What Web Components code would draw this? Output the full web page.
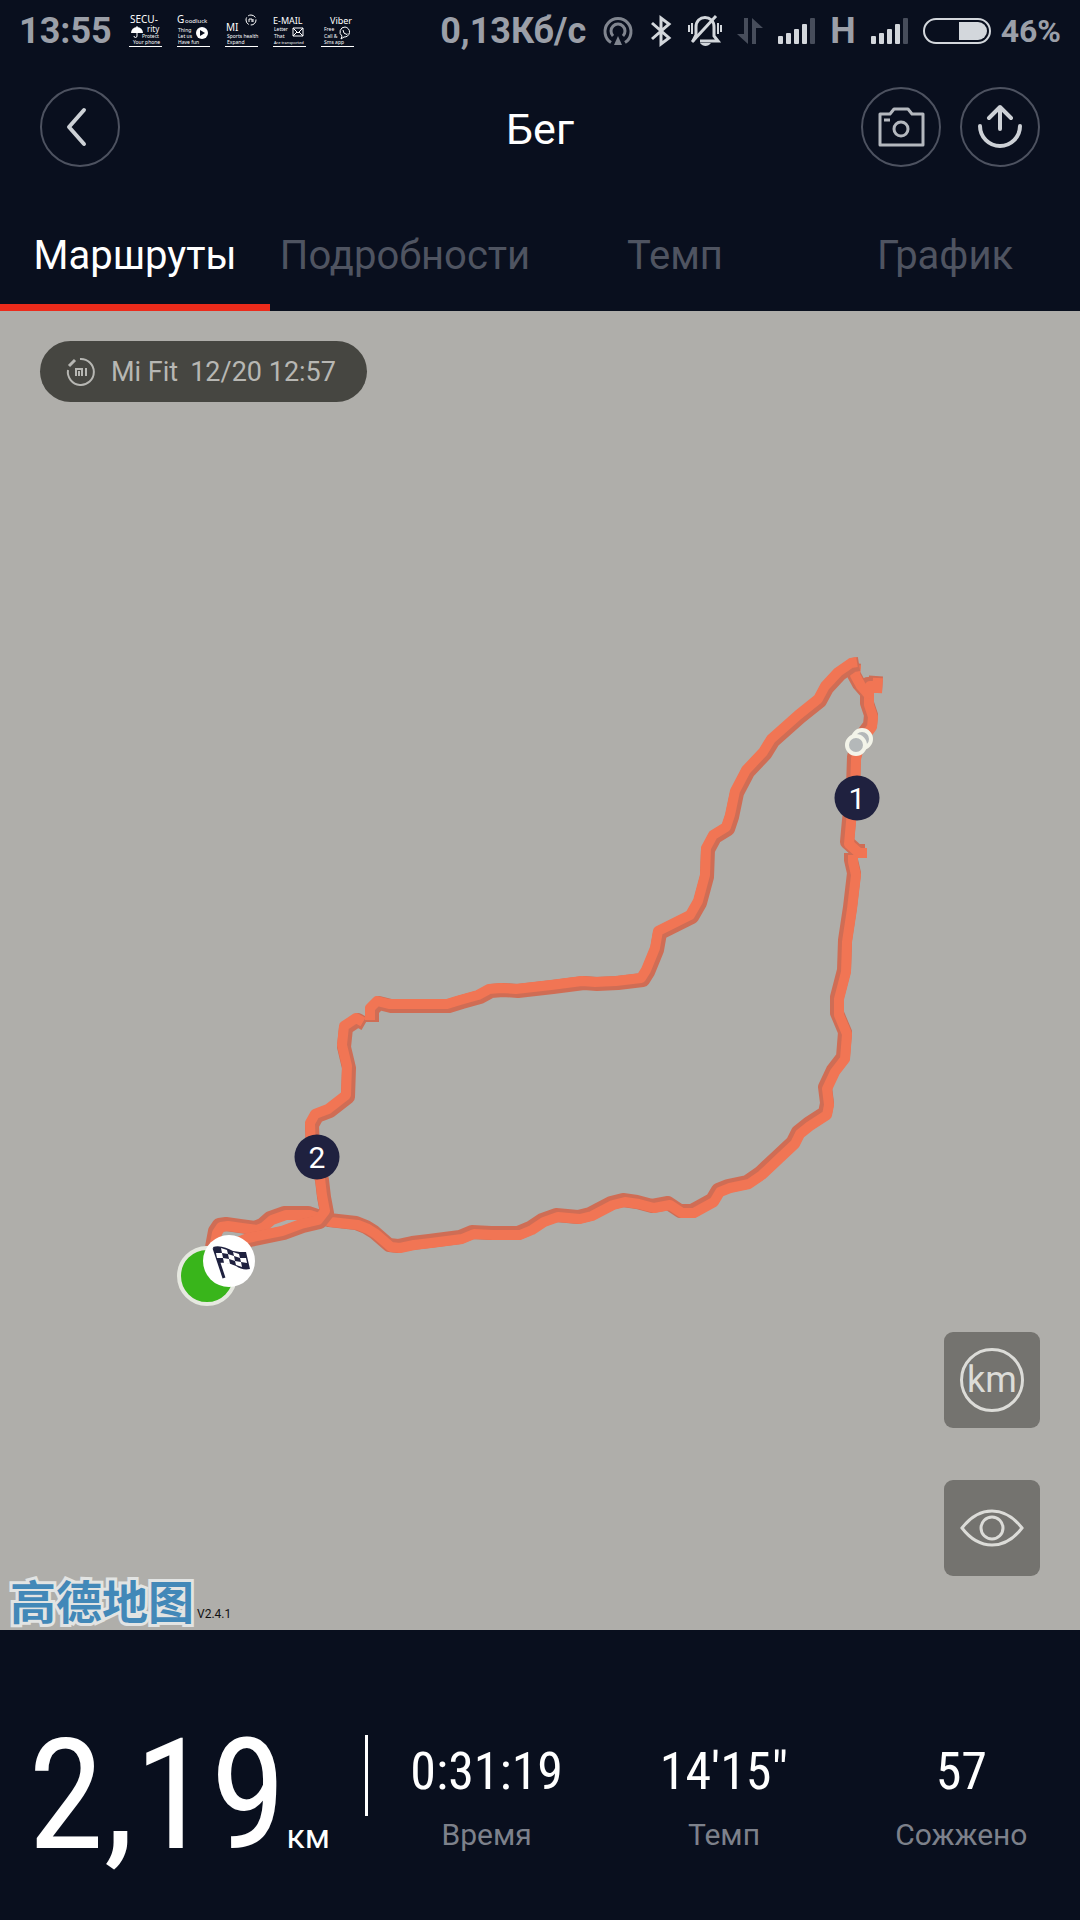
<!DOCTYPE html>
<html lang="ru">
<head>
<meta charset="utf-8">
<meta name="viewport" content="width=device-width, initial-scale=1">
<title>Бег</title>
<style>
  html, body {
    height: 100%;
  }
  body {
    margin: 0;
    background: #090f1e;
    color: #fff;
    font-family: Roboto, "Noto Sans", sans-serif;
  }
</style>
</head>
<body>
<run-screen>
  <status-bar slot="top"></status-bar>
  <title-bar slot="top">Бег</title-bar>
  <tab-bar slot="top"></tab-bar>
  <route-map></route-map>
  <run-summary slot="bottom" distance="2,19" unit="км">
    <stat-item label="Время">0:31:19</stat-item>
    <stat-item label="Темп">14'15"</stat-item>
    <stat-item label="Сожжено">57</stat-item>
  </run-summary>
</run-screen>

<script>
class RunScreen extends HTMLElement {
  connectedCallback() {
    this.attachShadow({ mode: 'open' });
    this.shadowRoot.innerHTML = `
      <style>
        :host {
          display: flex;
          flex-direction: column;
          min-height: 100vh;
        }
        main {
          flex: 1;
          display: flex;
          flex-direction: column;
        }
      </style>
      <header><slot name="top"></slot></header>
      <main><slot></slot></main>
      <footer><slot name="bottom"></slot></footer>
    `;
  }
}
customElements.define('run-screen', RunScreen);

class StatusBar extends HTMLElement {
  connectedCallback() {
    const signal = `
      <svg width="37" height="26" viewBox="0 0 37 26" fill="#d3d7dc">
        <rect x="0" y="18" width="5" height="8" rx="1"/>
        <rect x="8" y="15" width="5" height="11" rx="1"/>
        <rect x="16" y="11" width="5" height="15" rx="1"/>
        <rect x="24" y="6" width="5" height="20" rx="1"/>
        <rect x="32" y="0" width="5" height="26" rx="1" fill="#474d5b"/>
      </svg>`;
    this.attachShadow({ mode: 'open' });
    this.shadowRoot.innerHTML = `
      <style>
        :host {
          display: flex;
          align-items: center;
          justify-content: space-between;
          height: 60px;
          padding: 2px 19px 0;
          box-sizing: border-box;
          font-size: 36px;
          font-weight: 700;
          line-height: 40px;
          color: #9b9fa8;
        }
        svg {
          display: block;
          flex: none;
          overflow: visible;
        }
        .group {
          display: flex;
          align-items: center;
          gap: 15px;
        }
        .apps {
          margin-left: 2px;
        }
        .apps text {
          fill: #fff;
          font-family: "Noto Sans", sans-serif;
          font-weight: 400;
        }
        .power {
          display: flex;
          align-items: center;
          gap: 10px;
        }
        .percent {
          font-size: 32px;
        }
      </style>
      <div class="group">
        <time>13:55</time>
        <div class="group apps">
          <svg width="33" height="34" viewBox="0 0 33 34">
            <text x="1" y="9" font-size="10">SECU-</text>
            <text x="18" y="18" font-size="8">rity</text>
            <text x="13" y="24" font-size="5">Protect</text>
            <text x="4" y="30" font-size="5">Your phone</text>
            <path d="M2 19a6 6 0 0 1 12 0z" fill="#fff"/>
            <path d="M8 12v10a1.500 1.500 0 0 1-3 0" fill="none" stroke="#fff"/>
            <path d="M0 32.500h33" stroke="#fff"/>
          </svg>
          <svg width="33" height="34" viewBox="0 0 33 34">
            <text x="0" y="9" font-size="10">G</text>
            <text x="8" y="9" font-size="6">oodluck</text>
            <text x="1" y="18" font-size="5">Thing</text>
            <text x="1" y="24" font-size="5">Let us</text>
            <text x="1" y="30" font-size="5">Have fun</text>
            <circle cx="25" cy="19" r="6" fill="#fff"/>
            <path d="M23 16l5 3-5 3z" fill="#090f1e"/>
            <path d="M0 32.500h33" stroke="#fff"/>
          </svg>
          <svg width="33" height="34" viewBox="0 0 33 34">
            <text x="1" y="17" font-size="10">MI</text>
            <text x="2" y="24" font-size="5">Sports health</text>
            <text x="2" y="30" font-size="5">Expand</text>
            <circle cx="26" cy="6" r="5" fill="none" stroke="#fff" stroke-dasharray="8 2"/>
            <path d="M24 8v-3h3v3M28 5v3" fill="none" stroke="#fff"/>
            <path d="M0 32.500h33" stroke="#fff"/>
          </svg>
          <svg width="33" height="34" viewBox="0 0 33 34">
            <text x="0" y="10" font-size="9">E-MAIL</text>
            <text x="1" y="17" font-size="5">Letter</text>
            <text x="1" y="24" font-size="5">That</text>
            <text x="1" y="30" font-size="4">Are transported</text>
            <path d="M20 14h10v8h-10zl5 5 5-5M20 22l4-4M30 22l-4-4" fill="none" stroke="#fff"/>
            <path d="M0 32.500h33" stroke="#fff"/>
          </svg>
          <svg width="33" height="34" viewBox="0 0 33 34">
            <text x="9" y="10" font-size="9">Viber</text>
            <text x="3" y="17" font-size="5">Free</text>
            <text x="3" y="24" font-size="5">Call &amp;</text>
            <text x="3" y="30" font-size="5">Sms app</text>
            <path d="M24 13a5 5 0 1 1-1 10l-3 2 1-3a5 5 0 0 1 3-9z" fill="none" stroke="#fff"/>
            <path d="M22 16q0 4 4 4.500l1-1" fill="none" stroke="#fff"/>
            <path d="M0 32.500h33" stroke="#fff"/>
          </svg>
        </div>
      </div>
      <div class="group">
        <span>0,13Кб/с</span>
        <svg width="34" height="30" viewBox="0 0 34 30" fill="none" stroke="#80858f" stroke-width="3">
          <path d="M10 26.500a13 13 0 1 1 14 0"/>
          <path d="M12 20a7 7 0 1 1 10 0"/>
          <path d="M17 20l4 9h-8z" fill="#80858f" stroke="none"/>
        </svg>
        <svg width="23" height="30" viewBox="0 0 23 30" fill="none" stroke="#d3d7dc" stroke-width="3">
          <path d="M2 7l17 15-8 6V2l8 6L2 23"/>
        </svg>
        <svg width="34" height="32" viewBox="0 0 34 32" fill="none" stroke="#d3d7dc" stroke-width="3">
          <path d="M5 26l3-6v-8C8 6 12 2.500 17 2.500S26 6 26 12v9l4 5H12"/>
          <path d="M28 1L4 27"/>
          <path d="M12 28h11c-3 4-8 4-11 0z" fill="#d3d7dc" stroke="none"/>
          <path d="M1 10v7M4 8v11M30 8v11M33 10v7" stroke-width="2"/>
        </svg>
        <svg width="26" height="26" viewBox="0 0 26 26" fill="#474d5b">
          <path d="M7 0h4v26L0 16h7z"/>
          <path d="M15 26h4V10h7L15 0z"/>
        </svg>
        ${signal}
        <span>H</span>
        ${signal}
        <div class="power">
          <svg width="68" height="26" viewBox="0 0 68 26">
            <rect x="1" y="1" width="66" height="24" rx="12" fill="none" stroke="#d3d7dc" stroke-width="2"/>
            <path d="M36 4h19a9 9 0 0 1 0 18H36z" fill="#d3d7dc"/>
          </svg>
          <span class="percent">46%</span>
        </div>
      </div>
    `;
  }
}
customElements.define('status-bar', StatusBar);

class TitleBar extends HTMLElement {
  connectedCallback() {
    this.attachShadow({ mode: 'open' });
    this.shadowRoot.innerHTML = `
      <style>
        :host {
          display: grid;
          grid-template-columns: 1fr auto 1fr;
          align-items: center;
          padding: 27px 40px;
        }
        h1 {
          margin: 0;
          padding-top: 4px;
          font-size: 43px;
          font-weight: 400;
          line-height: 52px;
        }
        .actions {
          display: flex;
          justify-content: flex-end;
          gap: 19px;
        }
        button {
          display: block;
          width: 80px;
          height: 80px;
          padding: 0;
          border: 2px solid #4d5260;
          border-radius: 50%;
          background: none;
        }
        svg {
          display: block;
          margin: auto;
          fill: none;
          stroke: #cdd1d6;
          stroke-width: 4;
          stroke-linecap: round;
          stroke-linejoin: round;
        }
        .camera {
          stroke: #b4b8be;
          stroke-width: 3;
        }
      </style>
      <div>
        <button aria-label="Назад">
          <svg width="76" height="76" viewBox="0 0 76 76"><path d="M42 21L27 38l15 17"/></svg>
        </button>
      </div>
      <h1><slot></slot></h1>
      <div class="actions">
        <button aria-label="Камера">
          <svg class="camera" width="76" height="76" viewBox="0 0 76 76">
            <path d="M17 25h10l4-5h14l4 5h11v31H17z"/>
            <circle cx="38" cy="40" r="7"/>
            <path d="M21 31h6" stroke-linecap="butt"/>
          </svg>
        </button>
        <button aria-label="Поделиться">
          <svg width="76" height="76" viewBox="0 0 76 76">
            <path d="M38 40V18M27 29l11-11 11 11M18 37a20 20 0 0 0 40 0"/>
          </svg>
        </button>
      </div>
    `;
  }
}
customElements.define('title-bar', TitleBar);

class TabBar extends HTMLElement {
  connectedCallback() {
    this.attachShadow({ mode: 'open' });
    this.shadowRoot.innerHTML = `
      <style>
        :host {
          display: block;
        }
        nav {
          display: grid;
          grid-template-columns: repeat(4, 1fr);
        }
        button {
          padding: 38px 0 24px;
          border: 0;
          border-bottom: 7px solid transparent;
          background: none;
          color: #4f5461;
          font: 400 40px/48px Roboto, "Noto Sans", sans-serif;
        }
        button[aria-selected="true"] {
          color: #fff;
          border-color: #ec2b1b;
        }
      </style>
      <nav role="tablist">
        <button role="tab" aria-selected="true">Маршруты</button>
        <button role="tab" aria-selected="false">Подробности</button>
        <button role="tab" aria-selected="false">Темп</button>
        <button role="tab" aria-selected="false">График</button>
      </nav>
    `;
  }
}
customElements.define('tab-bar', TabBar);

// way out runs along the bottom and the right side, way back along the top
const WAY_OUT = [
  'M212 936L215 920 219 914 226 913 240 915 255 917 262 914 270 907 284 902 308 902 329 909 356 912 366 916 374 921 389 934 398 935 412 932 429 930 460 926 472 921 491 922 518 922 530 917 542 909 556 904 578 906 590 903 611 892 623 889 637 891 652 895 668 892 680 900 692 900 712 889 718 879 728 875 747 871 760 862 777 846 793 831 798 821 808 813 825 802 827 792 825 776 833 759 843 746 845 721 837 702 837 686 844 659 845 629 850 596 854 562 851 549 851 542',
  'M865 540L857 540 847 531 849 509 853 476 854 446 858 430 870 414 871 404 867 392 867 372',
  'M876 365L875 380M876 373L868 373 866 381 859 373 853 362 854 352'
];
const WAY_BACK = [
  'M859 353L853 354 840 363 827 377 820 390 800 406 773 430 765 443 748 461 737 482 732 506 728 518 715 526 708 539 707 566 700 592 692 606 660 622 657 639 648 661 643 669 618 672 597 673 584 672 553 676 518 680 503 679 491 680 480 686 462 691 449 695 391 695 379 692 372 699 372 711',
  'M365 713L358 709 346 717 344 736 349 757 348 786 330 800 317 805 312 814 313 840 322 869 324 886 327 902 320 911 303 915 284 922 250 929 230 937'
];

class RouteMap extends HTMLElement {
  connectedCallback() {
    const paths = (list, attrs) => `<g ${attrs}>${list.map(d => `<path d="${d}"/>`).join('')}</g>`;
    this.attachShadow({ mode: 'open' });
    this.shadowRoot.innerHTML = `
      <style>
        :host {
          position: relative;
          flex: 1;
          display: flex;
          flex-direction: column;
          justify-content: space-between;
          background: #afaeaa;
        }
        .route {
          position: absolute;
          inset: 0;
          width: 100%;
          height: 100%;
          fill: none;
          stroke-linejoin: round;
        }
        .route text {
          fill: #fff;
          font-size: 30px;
          text-anchor: middle;
        }
        .source {
          position: relative;
          align-self: flex-start;
          display: flex;
          align-items: center;
          margin: 30px 40px;
          padding: 0 31px 0 26px;
          height: 61px;
          border-radius: 31px;
          background: #464641;
          color: #b7b7b3;
          font-size: 27px;
          line-height: 36px;
        }
        .source svg {
          margin-right: 15px;
        }
        .source time {
          margin-left: 12px;
        }
        .tools {
          position: relative;
          align-self: flex-end;
          display: flex;
          flex-direction: column;
          gap: 52px;
          margin: auto 40px 0;
        }
        .tools button {
          display: flex;
          align-items: center;
          justify-content: center;
          width: 96px;
          height: 96px;
          padding: 0;
          border: 0;
          border-radius: 9px;
          background: #74736f;
          color: #dcdcd8;
          font: 400 36px/40px Roboto, sans-serif;
        }
        .unit {
          display: flex;
          align-items: center;
          justify-content: center;
          width: 58px;
          height: 58px;
          border: 3px solid #dcdcd8;
          border-radius: 50%;
        }
        .credit {
          position: relative;
          display: flex;
          align-items: flex-end;
          gap: 3px;
          padding: 0 10px 7px;
          color: #111;
          font-size: 12px;
          line-height: 18px;
        }
        .credit b {
          color: #4288b8;
          font: 700 46px/47px "Noto Sans CJK SC", sans-serif;
          -webkit-text-stroke: 6px #e2e4e3;
          paint-order: stroke fill;
        }
      </style>
      <svg class="route" viewBox="0 0 1080 1319" preserveAspectRatio="xMidYMin meet">
        ${paths(WAY_OUT, 'stroke="#cf6d55" stroke-width="14"')}
        ${paths(WAY_OUT, 'stroke="#f17554" stroke-width="10" transform="translate(2 2)"')}
        ${paths(WAY_BACK, 'stroke="#cf6d55" stroke-width="14"')}
        ${paths(WAY_BACK, 'stroke="#f17554" stroke-width="10" transform="translate(-2 -2)"')}
        <g fill="#b4b8b9" stroke="#f3f4e9" stroke-width="4">
          <circle cx="862" cy="428" r="9"/>
          <circle cx="856" cy="434" r="9"/>
        </g>
        <circle cx="857" cy="487" r="22.500" fill="#1f213f"/>
        <text x="857" y="498">1</text>
        <circle cx="317" cy="846" r="22.500" fill="#1f213f"/>
        <text x="317" y="857">2</text>
        <circle cx="207" cy="965" r="28" fill="#39b51b" stroke="#e6e8e0" stroke-width="4"/>
        <circle cx="229" cy="950" r="26" fill="#fff"/>
        <path d="M214 937l10 30" stroke="#1f213f" stroke-width="3"/>
        <path d="M213 936c7-2 14 1 20 4 5 1 9 1 13 1l4 17c-5 1-10 0-14-3-6-3-11-4-17-3z" fill="#1f213f"/>
        <g fill="#fff">
          <path d="M221 937l6 2 1 4-6-1z"/>
          <path d="M233 941l6 2 1 4-6-2z"/>
          <path d="M216 942l6 0 1 5-6 0z"/>
          <path d="M228 943l6 2 1 5-6-2z"/>
          <path d="M240 947l6 0 1 5-6-1z"/>
          <path d="M223 947l6 1 1 5-6-1z"/>
          <path d="M235 950l6 1 1 5-6-2z"/>
        </g>
      </svg>
      <div class="source">
        <svg width="30" height="30" viewBox="0 0 30 30" fill="none" stroke="#b7b7b3" stroke-width="2">
          <path d="M14 2a13 13 0 1 1-12 11"/>
          <path d="M3 9l6-6" stroke-width="3"/>
          <path d="M10 19v-7h6v7M13 14v5M20 11v8"/>
        </svg>
        <span>Mi Fit</span>
        <time>12/20 12:57</time>
      </div>
      <div class="tools">
        <button aria-label="km"><span class="unit">km</span></button>
        <button aria-label="Показать карту">
          <svg width="64" height="40" viewBox="0 0 64 40" fill="none" stroke="#dcdcd8" stroke-width="3">
            <path d="M2 20Q15 3 32 3t30 17Q49 37 32 37T2 20z"/>
            <circle cx="32" cy="20" r="11"/>
          </svg>
        </button>
      </div>
      <div class="credit"><b lang="zh">高德地图</b><span>V2.4.1</span></div>
    `;
  }
}
customElements.define('route-map', RouteMap);

class RunSummary extends HTMLElement {
  connectedCallback() {
    this.attachShadow({ mode: 'open' });
    this.shadowRoot.innerHTML = `
      <style>
        :host {
          display: flex;
          align-items: center;
          height: 290px;
        }
        .distance {
          display: flex;
          align-items: baseline;
          width: 365px;
          padding: 42px 0 0 28px;
          box-sizing: border-box;
          font: 400 154px/200px "Roboto Condensed", "Liberation Sans Narrow", Roboto, sans-serif;
        }
        small {
          font: 400 34px/40px Roboto, sans-serif;
        }
        .divider {
          width: 3px;
          height: 81px;
          background: #fff;
        }
        .stats {
          flex: 1;
          display: grid;
          grid-template-columns: repeat(3, 1fr);
          padding-top: 42px;
        }
      </style>
      <div class="distance">${this.getAttribute('distance')}<small>${this.getAttribute('unit')}</small></div>
      <div class="divider"></div>
      <div class="stats"><slot></slot></div>
    `;
  }
}
customElements.define('run-summary', RunSummary);

class StatItem extends HTMLElement {
  connectedCallback() {
    this.attachShadow({ mode: 'open' });
    this.shadowRoot.innerHTML = `
      <style>
        :host {
          display: flex;
          flex-direction: column;
          align-items: center;
          gap: 13px;
        }
        .value {
          font: 400 52px/64px "Roboto Condensed", "Liberation Sans Narrow", Roboto, sans-serif;
        }
        .label {
          color: #7d818b;
          font-size: 30px;
          line-height: 36px;
        }
      </style>
      <span class="value"><slot></slot></span>
      <span class="label">${this.getAttribute('label')}</span>
    `;
  }
}
customElements.define('stat-item', StatItem);
</script>
</body>
</html>
